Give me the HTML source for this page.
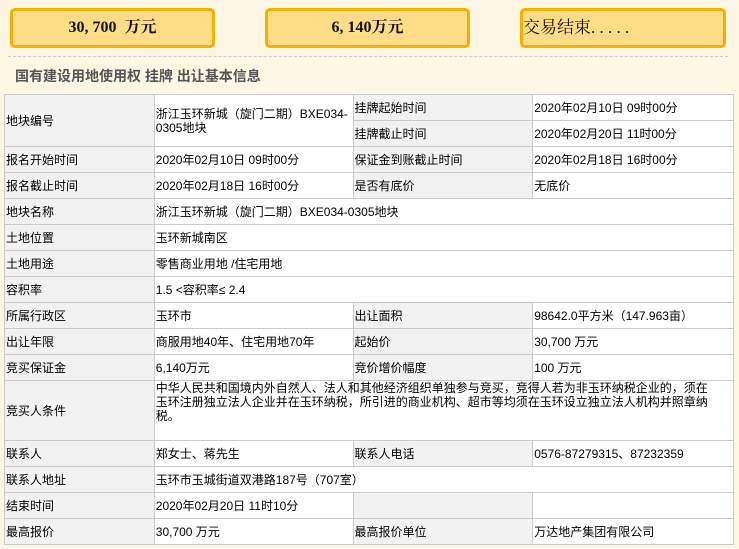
<!DOCTYPE html>
<html><head><meta charset="utf-8"><style>
body{margin:0;width:739px;height:549px;background:#fdf7e3;font-family:"Liberation Sans","WenQuanYi Zen Hei","Noto Sans CJK SC",sans-serif;position:relative;overflow:hidden}
.box{position:absolute;top:8px;height:34px;border:3px solid #f5b000;border-radius:5px;background:#ffdc86;font:bold 16px "Liberation Serif","Noto Serif CJK SC",serif;color:#111;line-height:34px;text-align:center;white-space:pre}
.dash{position:absolute;left:8px;top:56px;width:720px;border-top:1px dashed #ccc}
.title{position:absolute;left:15px;top:66px;font-size:14px;font-weight:bold;color:#555}
table{position:absolute;left:4px;top:94px;width:730px;border-collapse:collapse;font-size:12px;color:#000}
td{border:1px solid #cbcbcb;height:25px;padding:0 0 0 1px;background:#fff;vertical-align:middle;line-height:14px}
td.l{background:#f2f2f2}
</style></head><body>
<div class="box" style="left:10px;width:199px">30, 700  万元</div>
<div class="box" style="left:265px;width:199px">6, 140万元</div>
<div class="box" style="left:520px;width:200px;text-align:left;font-weight:normal;font-size:17px;font-family:'Liberation Serif','Noto Serif CJK SC',serif">交易结束. . . . .</div>
<div class="dash"></div>
<div class="title">国有建设用地使用权 挂牌 出让基本信息</div>
<table>
<colgroup><col style="width:150px"><col style="width:199px"><col style="width:180px"><col style="width:201px"></colgroup>
<tr><td class="l" rowspan="2">地块编号</td><td rowspan="2">浙江玉环新城（旋门二期）BXE034-0305地块</td><td class="l">挂牌起始时间</td><td>2020年02月10日 09时00分</td></tr>
<tr><td class="l">挂牌截止时间</td><td>2020年02月20日 11时00分</td></tr>
<tr><td class="l">报名开始时间</td><td>2020年02月10日 09时00分</td><td class="l">保证金到账截止时间</td><td>2020年02月18日 16时00分</td></tr>
<tr><td class="l">报名截止时间</td><td>2020年02月18日 16时00分</td><td class="l">是否有底价</td><td>无底价</td></tr>
<tr><td class="l">地块名称</td><td colspan="3">浙江玉环新城（旋门二期）BXE034-0305地块</td></tr>
<tr><td class="l">土地位置</td><td colspan="3">玉环新城南区</td></tr>
<tr><td class="l">土地用途</td><td colspan="3">零售商业用地 /住宅用地</td></tr>
<tr><td class="l">容积率</td><td colspan="3">1.5 &lt;容积率≤ 2.4</td></tr>
<tr><td class="l">所属行政区</td><td>玉环市</td><td class="l">出让面积</td><td>98642.0平方米（147.963亩）</td></tr>
<tr><td class="l">出让年限</td><td>商服用地40年、住宅用地70年</td><td class="l">起始价</td><td>30,700 万元</td></tr>
<tr><td class="l">竞买保证金</td><td>6,140万元</td><td class="l">竞价增价幅度</td><td>100 万元</td></tr>
<tr><td class="l" style="height:59px">竞买人条件</td><td colspan="3" style="vertical-align:top;padding-right:14px">中华人民共和国境内外自然人、法人和其他经济组织单独参与竞买，竞得人若为非玉环纳税企业的，须在玉环注册独立法人企业并在玉环纳税，所引进的商业机构、超市等均须在玉环设立独立法人机构并照章纳税。</td></tr>
<tr><td class="l">联系人</td><td>郑女士、蒋先生</td><td class="l">联系人电话</td><td>0576-87279315、87232359</td></tr>
<tr><td class="l">联系人地址</td><td colspan="3">玉环市玉城街道双港路187号（707室）</td></tr>
<tr><td class="l">结束时间</td><td>2020年02月20日 11时10分</td><td class="l"></td><td></td></tr>
<tr><td class="l">最高报价</td><td>30,700 万元</td><td class="l">最高报价单位</td><td>万达地产集团有限公司</td></tr>
</table>
</body></html>
